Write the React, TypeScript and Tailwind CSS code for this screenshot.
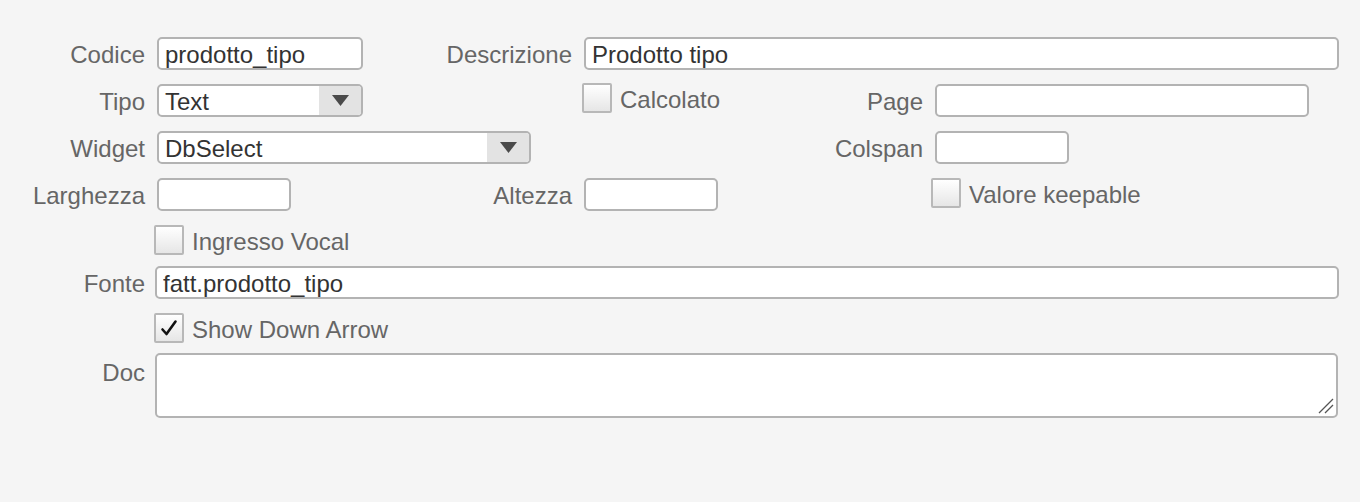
import React from "react";

// Form for a field definition: labels right-aligned in their own columns,
// fields laid out on a six-column grid.

const label = "flex h-[33px] items-center justify-end whitespace-nowrap pt-[3px] text-[#666]";
const input =
  "h-[33px] rounded-[5px] border-2 border-[#b3b3b3] bg-white px-[6px] pt-[3px] text-[#333] outline-none";

function Select({ value, width }: { value: string; width: string }) {
  return (
    <div className={`flex h-[33px] overflow-hidden rounded-[5px] border-2 border-[#b3b3b3] bg-white ${width}`}>
      <span className="flex flex-1 items-center px-[6px] pt-[3px] text-[#333]">{value}</span>
      <span className="flex w-[42px] items-center justify-center bg-[#e3e3e3]">
        <svg width="17" height="11" viewBox="0 0 17 11">
          <path d="M0 0h17L8.5 11z" fill="#4a4a4a" />
        </svg>
      </span>
    </div>
  );
}

function Check({ text, checked = false, shift }: { text: string; checked?: boolean; shift: string }) {
  return (
    <label className={`flex h-[30px] items-center gap-[8px] whitespace-nowrap text-[#666] ${shift}`}>
      <span className="flex h-[30px] w-[30px] shrink-0 items-center justify-center rounded-[2px] border-2 border-[#b8b8b8] bg-gradient-to-b from-white to-[#e6e6e6]">
        {checked && (
          <svg width="18" height="18" viewBox="0 0 18 18">
            <path
              d="M2.5 10.5 L6.5 15 L15.5 2.5"
              fill="none"
              stroke="#111"
              strokeWidth="2.6"
              strokeLinecap="round"
              strokeLinejoin="round"
            />
          </svg>
        )}
      </span>
      <span className="pt-[3px]">{text}</span>
    </label>
  );
}

export default function App() {
  return (
    <div
      className="min-h-[502px] w-full bg-[#f5f5f5] pt-[37px] pr-[21px] text-[24px] leading-none"
      style={{ fontFamily: '"Liberation Sans", Arial, sans-serif' }}
    >
      <div className="grid grid-cols-[145px_280px_123px_176px_151px_1fr] grid-rows-[47px_47px_47px_47px_41px_47px_40px_65px] items-start gap-x-3">
        {/* Row 1 */}
        <div className={label}>Codice</div>
        <div>
          <input className={`${input} w-[206px]`} defaultValue="prodotto_tipo" />
        </div>
        <div className={label}>Descrizione</div>
        <div className="col-span-3">
          <input className={`${input} w-full`} defaultValue="Prodotto tipo" />
        </div>

        {/* Row 2 */}
        <div className={label}>Tipo</div>
        <div>
          <Select value="Text" width="w-[206px]" />
        </div>
        <div />
        <div className="-mt-px">
          <Check text="Calcolato" shift="-ml-[2px]" />
        </div>
        <div className={label}>Page</div>
        <div>
          <input className={`${input} w-[374px]`} />
        </div>

        {/* Row 3 */}
        <div className={label}>Widget</div>
        <div className="col-span-2">
          <Select value="DbSelect" width="w-[374px]" />
        </div>
        <div />
        <div className={label}>Colspan</div>
        <div>
          <input className={`${input} w-[134px]`} />
        </div>

        {/* Row 4 */}
        <div className={label}>Larghezza</div>
        <div>
          <input className={`${input} w-[134px]`} />
        </div>
        <div className={label}>Altezza</div>
        <div>
          <input className={`${input} w-[134px]`} />
        </div>
        <div />
        <div>
          <Check text="Valore keepable" shift="-ml-[4px]" />
        </div>

        {/* Row 5 */}
        <div />
        <div className="col-span-5">
          <Check text="Ingresso Vocal" shift="-ml-[3px]" />
        </div>

        {/* Row 6 */}
        <div className={label}>Fonte</div>
        <div className="col-span-5 -ml-[2px]">
          <input className={`${input} w-full`} defaultValue="fatt.prodotto_tipo" />
        </div>

        {/* Row 7 */}
        <div />
        <div className="col-span-5">
          <Check text="Show Down Arrow" checked shift="-ml-[3px]" />
        </div>

        {/* Row 8 */}
        <div className={`${label} mt-[2px]`}>Doc</div>
        <div className="relative col-span-5 -ml-[2px] pr-px">
          <textarea className="block h-[65px] w-full resize-none rounded-[5px] border-2 border-[#b3b3b3] bg-white px-[6px] text-[#333] outline-none" />
          {/* resize grip */}
          <svg className="pointer-events-none absolute bottom-[4px] right-[5px]" width="16" height="16" viewBox="0 0 16 16">
            <path d="M1 15 L15 1 M7 15 L15 7" stroke="#555" strokeWidth="1.3" />
          </svg>
        </div>
      </div>
    </div>
  );
}
